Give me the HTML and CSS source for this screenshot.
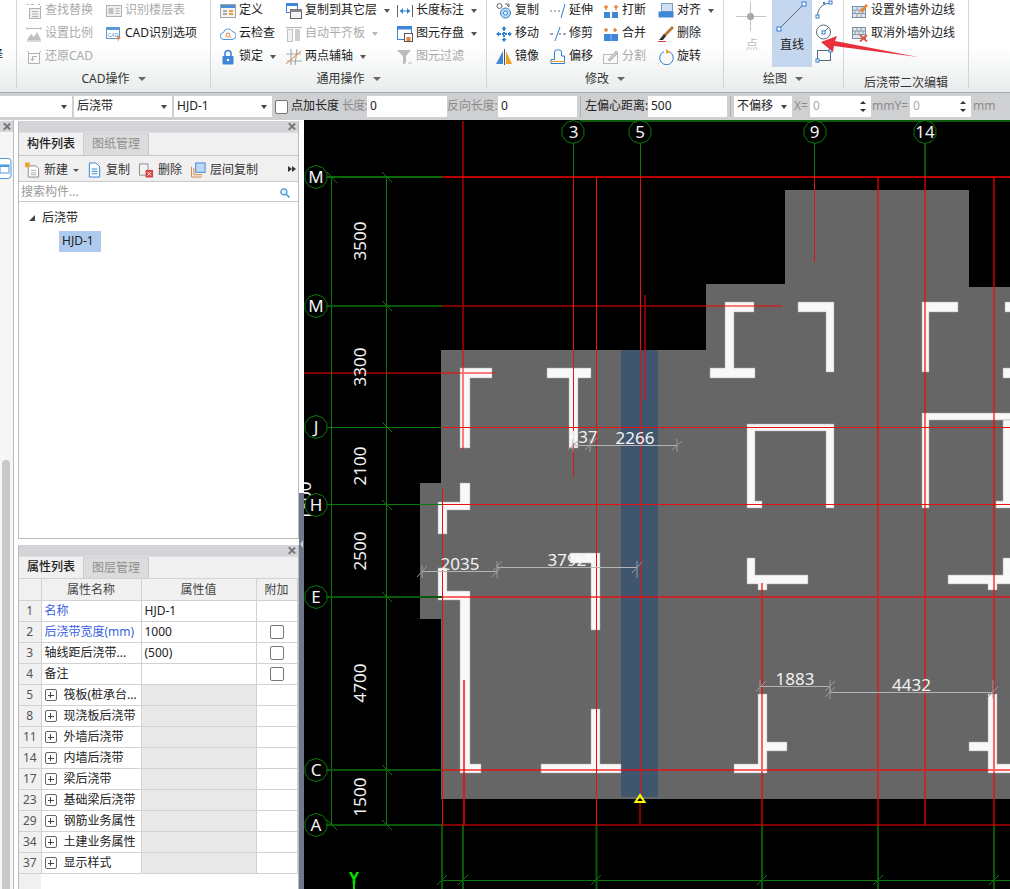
FILE: index.html
```html
<!DOCTYPE html>
<html lang="zh-CN">
<head>
<meta charset="utf-8">
<title>后浇带</title>
<link rel="stylesheet" href="styles.css">
</head>
<body>
<svg class="sprite" width="0" height="0" aria-hidden="true">
  <symbol id="i-find" viewBox="0 0 16 16"><path d="M1 1.500h2M5 1.500h3M12 1.500h2" stroke="#aaa" fill="none"/><path d="M14.500 3v2" stroke="#aaa"/><rect x="3.500" y="5.500" width="11" height="10" fill="#eee" stroke="#aaa"/><path d="M6 8.500h6M6 11h6M6 13.500h6" stroke="#aaa"/></symbol>
  <symbol id="i-floor" viewBox="0 0 16 16"><rect x=".5" y="2.500" width="15" height="11" fill="#eee" stroke="#aaa"/><rect x="2.500" y="5" width="5" height="6" fill="#bbb"/><path d="M9.500 5.500h4M9.500 8h4M9.500 10.500h4" stroke="#aaa"/></symbol>
  <symbol id="i-scale" viewBox="0 0 16 16"><path d="M1 2.500h14M1 1v3M15 1v3" stroke="#b5b5b5" fill="none"/><path d="M1 14l4-6 3 3 3-5 4 8z" fill="#b9b9b9"/><path d="M1 15h14" stroke="#aaa"/></symbol>
  <symbol id="i-restore" viewBox="0 0 16 16"><path d="M2.500 4.500h11v10h-11z" fill="none" stroke="#aaa"/><path d="M1 2l3 3M15 2l-3 3" stroke="#aaa"/><path d="M11 7.500H6.500v4M6.500 11.500l-2-2M6.500 11.500l2-2" fill="none" stroke="#aaa"/></symbol>
  <symbol id="i-define" viewBox="0 0 16 16"><rect x=".5" y="1.500" width="15" height="13" fill="#f4f4f4" stroke="#9aa6b2"/><rect x="1" y="2" width="14" height="3" fill="#4a8fd8"/><path d="M3 8h4M3 11h4" stroke="#aaa" stroke-width="2"/><path d="M9 8h4M9 11h4" stroke="#f0a030" stroke-width="2"/></symbol>
  <symbol id="i-cloud" viewBox="0 0 16 16"><path d="M4 13.500a3.500 3.500 0 0 1-.5-7A4.500 4.500 0 0 1 12 5.500a4 4 0 0 1 0 8z" fill="#fff" stroke="#4a9ae0"/><circle cx="8" cy="9" r="2" fill="none" stroke="#e9823a"/><path d="M9.500 10.500l1.500 1.500" stroke="#e9823a"/></symbol>
  <symbol id="i-lock" viewBox="0 0 16 16"><path d="M5 7V4.500a3 3 0 0 1 6 0V7" fill="none" stroke="#3f85d8" stroke-width="1.600"/><rect x="2.500" y="7" width="11" height="8.500" rx="1" fill="#3f85d8"/><circle cx="8" cy="11" r="1.300" fill="#fff"/></symbol>
  <symbol id="i-copyfloor" viewBox="0 0 16 16"><rect x=".5" y=".5" width="11" height="9" fill="#fff" stroke="#3f85d8"/><rect x=".5" y=".5" width="11" height="2.500" fill="#3f85d8"/><rect x="4.500" y="6.500" width="11" height="9" fill="#f2f2f2" stroke="#666"/><rect x="4.500" y="6.500" width="11" height="2.500" fill="#888"/></symbol>
  <symbol id="i-autoalign" viewBox="0 0 16 16"><path d="M0 1.500h16" stroke="#aaa"/><rect x="1.500" y="3.500" width="5" height="12" fill="#f2f2f2" stroke="#bbb"/><rect x="9" y="3" width="5" height="12" fill="#c9c9c9"/></symbol>
  <symbol id="i-axis" viewBox="0 0 16 16"><path d="M5 0v16M11 0l-2 16" stroke="#999" fill="none"/><path d="M0 5h15M1 12h15" stroke="#aaa"/><path d="M0 15L15 2" stroke="#e9823a"/></symbol>
  <symbol id="i-dim" viewBox="0 0 16 16"><path d="M.5 2v12M15.500 2v12" stroke="#666"/><path d="M3 8h10" stroke="#2f7fd0"/><path d="M3 8l3-3v6zM13 8l-3-3v6z" fill="#2f7fd0"/></symbol>
  <symbol id="i-save" viewBox="0 0 16 16"><rect x=".5" y=".5" width="14" height="13" fill="#fff" stroke="#3f85d8"/><rect x=".5" y=".5" width="14" height="3" fill="#3f85d8"/><rect x="7.500" y="7.500" width="8" height="8" fill="#fff" stroke="#555"/><rect x="9.500" y="11" width="4" height="4" fill="#e9823a"/></symbol>
  <symbol id="i-filter" viewBox="0 0 16 16"><path d="M0 1h14L9 7v7l-3 1.500V7z" fill="#b5b5b5"/><path d="M11 14h4" stroke="#bbb"/></symbol>
  <symbol id="i-copy" viewBox="0 0 16 16"><circle cx="3.500" cy="3" r="2.500" fill="none" stroke="#666"/><circle cx="9.500" cy="10" r="5" fill="#bcdcf5" stroke="#2f7fd0"/><circle cx="9.500" cy="10" r="2" fill="#fff" stroke="#2f7fd0"/><path d="M9 1h4v3M13 4l-2-2" fill="none" stroke="#666"/></symbol>
  <symbol id="i-extend" viewBox="0 0 16 16"><path d="M0 8h2M4 8h2M8 8h2" stroke="#777"/><path d="M11 15l4-14" stroke="#2f7fd0"/></symbol>
  <symbol id="i-break" viewBox="0 0 16 16"><path d="M1 9h6v6H1zM9 9h6v6H9z" fill="#3f85d8"/><path d="M3 2v5M13 2v5" stroke="#e9823a" stroke-width="1.500"/><path d="M1 4h4M11 4h4" stroke="#e9823a" stroke-width="1.500"/></symbol>
  <symbol id="i-align" viewBox="0 0 16 16"><rect x="3.500" y=".5" width="11" height="8" fill="#cfe0f3" stroke="#7a9cc0"/><rect x=".5" y="8.500" width="15" height="6" fill="#3f85d8"/></symbol>
  <symbol id="i-move" viewBox="0 0 16 16"><path d="M8 0l2.500 3h-5zM8 16l2.500-3h-5zM0 8l3-2.500v5zM16 8l-3-2.500v5z" fill="#2f7fd0"/><path d="M3 8h10M8 3v10" stroke="#2f7fd0" stroke-width="2" stroke-dasharray="2 1"/></symbol>
  <symbol id="i-trim" viewBox="0 0 16 16"><path d="M0 8h3M9 8h2M13 8h3" stroke="#555"/><path d="M5 15L10 1" stroke="#2f7fd0"/></symbol>
  <symbol id="i-merge" viewBox="0 0 16 16"><rect x="1" y="8" width="14" height="7" fill="#3f85d8"/><path d="M8 8v7" stroke="#8ab8ea"/><path d="M3 2v4M1 4h4M12 2v4M10 4h4" stroke="#e9823a" stroke-width="1.500"/></symbol>
  <symbol id="i-delete" viewBox="0 0 16 16"><path d="M15 1L6 10" stroke="#b5793a" stroke-width="3"/><path d="M6 8l2 2-3 4H1z" fill="#333"/><path d="M0 15.500h8" stroke="#e03030"/></symbol>
  <symbol id="i-mirror" viewBox="0 0 16 16"><path d="M7 2v13H0z" fill="#3f85d8"/><path d="M8.500 0v16" stroke="#555"/><path d="M10 2v13h6z" fill="#f0a020"/></symbol>
  <symbol id="i-offset" viewBox="0 0 16 16"><path d="M1 14.500v-4h3.500V3a2 2 0 0 1 2-2h3a2 2 0 0 1 2 2v4h3v7.500z" fill="#fff" stroke="#2f7fd0"/><path d="M1 12.500h14" stroke="#f0a020"/></symbol>
  <symbol id="i-split" viewBox="0 0 16 16"><rect x=".5" y="5.500" width="14" height="9" fill="none" stroke="#b5b5b5"/><path d="M5 11L13 2l2 2-8 8z" fill="#ccc" stroke="#aaa"/></symbol>
  <symbol id="i-rotate" viewBox="0 0 16 16"><path d="M6 2.600A6.800 6.800 0 1 0 11 2.600" fill="none" stroke="#2f7fd0"/><path d="M8 0l4 3-4 2z" fill="#f0a020"/></symbol>
  <symbol id="i-wallset" viewBox="0 0 16 16"><rect x=".5" y="3.500" width="13" height="11" fill="#e4e8ec" stroke="#7890a8"/><path d="M1 7h12M1 10.500h12M5 3.500V7M9 3.500V7M3 7v3.500M7 7v3.500M11 7v3.500M5 10.500v4M9 10.500v4" stroke="#8a9aaa"/><path d="M8 8L14 1l2 1.500-6 7z" fill="#f08020"/></symbol>
  <symbol id="i-wallno" viewBox="0 0 16 16"><rect x=".5" y="1.500" width="13" height="11" fill="#e4e8ec" stroke="#7890a8"/><path d="M1 5h12M1 8.500h12M5 1.500V5M9 1.500V5M3 5v3.500M7 5v3.500M11 5v3.500" stroke="#8a9aaa"/><path d="M8 9l7 6.500M15 9l-7 6.500" stroke="#e0503a" stroke-width="1.800"/></symbol>
  <symbol id="i-new" viewBox="0 0 16 16"><path d="M3.500 3.500h8l3 3v9h-11z" fill="#fff" stroke="#888"/><path d="M6 8.500h6M6 11h6M6 13h6" stroke="#aaa"/><rect x="0" y="0" width="5" height="5" fill="#f0a030"/></symbol>
  <symbol id="i-pcopy" viewBox="0 0 16 16"><path d="M2.500 .5h7l4 4v11h-11z" fill="#fff" stroke="#2f7fd0"/><path d="M5 7h6M5 9.500h6M5 12h6" stroke="#2f7fd0"/></symbol>
  <symbol id="i-pdel" viewBox="0 0 16 16"><path d="M.5 1.500h9v12h-9z" fill="#f2f2f2" stroke="#888"/><rect x="7" y="8" width="8" height="8" fill="#d84040"/><path d="M9 10l4 4M13 10l-4 4" stroke="#fff"/></symbol>
  <symbol id="i-layer" viewBox="0 0 16 16"><path d="M.5 15.500v-11M.5 15.500h11M3 13V6M3 13h9" fill="none" stroke="#e0803a"/><rect x="5" y=".5" width="10" height="10" fill="#bcd8f4" stroke="#3f85d8"/></symbol>
  <symbol id="i-mag" viewBox="0 0 16 16"><circle cx="6.500" cy="6.500" r="4" fill="#e8f3fb" stroke="#3f95d0" stroke-width="1.600"/><path d="M10 10l4 4" stroke="#3f95d0" stroke-width="2"/></symbol>
  <symbol id="i-panel" viewBox="0 0 12 21"><rect x="-3" y=".5" width="14" height="20" rx="3" fill="#fff" stroke="#4a9ae0"/><rect x="0" y="7" width="9" height="8" fill="#fff" stroke="#4a9ae0"/><rect x="0" y="7" width="9" height="2" fill="#4a9ae0"/></symbol>
</svg>

<div class="app">
  <header class="ribbon">
    <section class="grp g0"><div class="gbody clip">择</div></section>

    <section class="grp g1">
      <div class="gbody">
        <div class="col c80">
          <div class="it off"><svg class="ic"><use href="#i-find"/></svg><span>查找替换</span></div>
          <div class="it off"><svg class="ic"><use href="#i-scale"/></svg><span>设置比例</span></div>
          <div class="it off"><svg class="ic"><use href="#i-restore"/></svg><span>还原CAD</span></div>
        </div>
        <div class="col">
          <div class="it off"><svg class="ic"><use href="#i-floor"/></svg><span>识别楼层表</span></div>
          <div class="it"><svg class="ic" viewBox="0 0 16 16"><rect x=".5" y="1.500" width="13" height="11" fill="#fff" stroke="#5b9bd5"/><rect x=".5" y="1.500" width="13" height="2.500" fill="#5b9bd5"/><text x="7" y="10.500" class="tiny">CAD</text><path d="M11 9l4 3-2 1-1 3z" fill="#e9823a"/></svg><span>CAD识别选项</span></div>
        </div>
      </div>
      <div class="glabel">CAD操作<i class="car"></i></div>
    </section>

    <section class="grp g2">
      <div class="gbody">
        <div class="col c66">
          <div class="it"><svg class="ic"><use href="#i-define"/></svg><span>定义</span></div>
          <div class="it"><svg class="ic"><use href="#i-cloud"/></svg><span>云检查</span></div>
          <div class="it"><svg class="ic"><use href="#i-lock"/></svg><span>锁定</span><i class="car"></i></div>
        </div>
        <div class="col c111">
          <div class="it"><svg class="ic"><use href="#i-copyfloor"/></svg><span>复制到其它层</span><i class="car"></i></div>
          <div class="it off"><svg class="ic"><use href="#i-autoalign"/></svg><span>自动平齐板</span><i class="car"></i></div>
          <div class="it"><svg class="ic"><use href="#i-axis"/></svg><span>两点辅轴</span><i class="car"></i></div>
        </div>
        <div class="col">
          <div class="it"><svg class="ic"><use href="#i-dim"/></svg><span>长度标注</span><i class="car"></i></div>
          <div class="it"><svg class="ic"><use href="#i-save"/></svg><span>图元存盘</span><i class="car"></i></div>
          <div class="it off"><svg class="ic"><use href="#i-filter"/></svg><span>图元过滤</span></div>
        </div>
      </div>
      <div class="glabel">通用操作<i class="car"></i></div>
    </section>

    <section class="grp g3">
      <div class="gbody">
        <div class="col c54">
          <div class="it"><svg class="ic"><use href="#i-copy"/></svg><span>复制</span></div>
          <div class="it"><svg class="ic"><use href="#i-move"/></svg><span>移动</span></div>
          <div class="it"><svg class="ic"><use href="#i-mirror"/></svg><span>镜像</span></div>
        </div>
        <div class="col c53">
          <div class="it"><svg class="ic"><use href="#i-extend"/></svg><span>延伸</span></div>
          <div class="it"><svg class="ic"><use href="#i-trim"/></svg><span>修剪</span></div>
          <div class="it"><svg class="ic"><use href="#i-offset"/></svg><span>偏移</span></div>
        </div>
        <div class="col c55">
          <div class="it"><svg class="ic"><use href="#i-break"/></svg><span>打断</span></div>
          <div class="it"><svg class="ic"><use href="#i-merge"/></svg><span>合并</span></div>
          <div class="it off"><svg class="ic"><use href="#i-split"/></svg><span>分割</span></div>
        </div>
        <div class="col">
          <div class="it"><svg class="ic"><use href="#i-align"/></svg><span>对齐</span><i class="car"></i></div>
          <div class="it"><svg class="ic"><use href="#i-delete"/></svg><span>删除</span></div>
          <div class="it"><svg class="ic"><use href="#i-rotate"/></svg><span>旋转</span></div>
        </div>
      </div>
      <div class="glabel">修改<i class="car"></i></div>
    </section>

    <section class="grp g4">
      <div class="gbody">
        <div class="big off">
          <svg class="bigic" viewBox="0 0 40 32"><path d="M4 15.500h30M18.500 1v29" stroke="#c4c4c4"/><circle cx="18.500" cy="15.500" r="3.500" fill="#a8a8a8"/></svg>
          <span>点</span>
        </div>
        <div class="big on">
          <svg class="bigic" viewBox="0 0 40 32"><path d="M7 28L32 3" stroke="#5a6a7a"/><rect x="5" y="26" width="4" height="4" fill="#fff" stroke="#2f7fd0"/><rect x="30" y="1" width="4" height="4" fill="#fff" stroke="#2f7fd0"/></svg>
          <span>直线</span>
        </div>
        <div class="minis">
          <svg class="mini" viewBox="0 0 20 23"><path d="M3.500 17C4 9 8 5 16 4" fill="none" stroke="#5a6a7a"/><rect x="2" y="16" width="3" height="3" fill="#fff" stroke="#2f7fd0"/><rect x="15" y="2" width="3" height="3" fill="#fff" stroke="#2f7fd0"/><rect x="9" y="3" width="2" height="2" fill="#2f7fd0"/></svg>
          <svg class="mini" viewBox="0 0 20 23"><circle cx="9.500" cy="10" r="7" fill="none" stroke="#5a6a7a"/><rect x="8" y="9" width="3" height="3" fill="#fff" stroke="#2f7fd0"/><path d="M11 9l3-3" stroke="#5a6a7a"/></svg>
          <svg class="mini" viewBox="0 0 20 23"><rect x="3.500" y="5.500" width="13" height="10" fill="none" stroke="#5a6a7a"/><rect x="2" y="14" width="3" height="3" fill="#fff" stroke="#2f7fd0"/><rect x="15" y="4" width="3" height="3" fill="#fff" stroke="#2f7fd0"/></svg>
        </div>
      </div>
      <div class="glabel">绘图<i class="car"></i></div>
    </section>

    <section class="grp g5">
      <div class="gbody">
        <div class="col">
          <div class="it"><svg class="ic"><use href="#i-wallset"/></svg><span>设置外墙外边线</span></div>
          <div class="it"><svg class="ic"><use href="#i-wallno"/></svg><span>取消外墙外边线</span></div>
        </div>
      </div>
      <div class="glabel low">后浇带二次编辑</div>
    </section>
    <section class="grp g6"></section>
  </header>

  <div class="optbar">
    <div class="combo w72"><i class="car"></i></div>
    <div class="combo w98 m2"><span>后浇带</span><i class="car"></i></div>
    <div class="combo w98 m2"><span>HJD-1</span><i class="car"></i></div>
    <span class="cb m3"></span>
    <span class="lb w48 m3">点加长度</span>
    <span class="lb dim w25 m3">长度:</span>
    <div class="inp w80">0</div>
    <span class="lb dim w51">反向长度:</span>
    <div class="inp w79">0</div>
    <i class="sep"></i>
    <span class="lb w64">左偏心距离:</span>
    <div class="inp w79">500</div>
    <i class="sep"></i>
    <div class="combo w58"><span>不偏移</span><i class="car"></i></div>
    <span class="lb dim w18">X=</span>
    <div class="inp w61 spin dimv">0<b class="spn"><i class="up"></i><i class="dn"></i></b></div>
    <span class="lb dim w39">mmY=</span>
    <div class="inp w61 spin dimv">0<b class="spn"><i class="up"></i><i class="dn"></i></b></div>
    <span class="lb dim m2">mm</span>
  </div>

  <main class="work">
    <aside class="strip">
      <div class="phead"><i class="x"></i></div>
      <svg class="stripic" viewBox="0 0 12 21"><use href="#i-panel"/></svg>
      <div class="grow"></div>
      <div class="sbar"></div>
    </aside>

    <aside class="side">
      <section class="panel p1">
        <div class="phead"><i class="x"></i></div>
        <div class="tabs"><span class="tab act">构件列表</span><span class="tab">图纸管理</span></div>
        <div class="ptools">
          <span class="pt n1"><svg class="ic"><use href="#i-new"/></svg>新建<i class="car"></i></span>
          <span class="pt n2"><svg class="ic"><use href="#i-pcopy"/></svg>复制</span>
          <span class="pt n3"><svg class="ic"><use href="#i-pdel"/></svg>删除</span>
          <span class="pt n4"><svg class="ic"><use href="#i-layer"/></svg>层间复制</span>
          <span class="more"></span>
        </div>
        <div class="search"><span>搜索构件...</span><svg class="mag"><use href="#i-mag"/></svg></div>
        <div class="tree">
          <div class="node"><i class="tri"></i>后浇带</div>
          <div class="leaf"><span>HJD-1</span></div>
        </div>
      </section>

      <section class="panel p2">
        <div class="phead"><i class="x"></i></div>
        <div class="tabs t2"><span class="tab act">属性列表</span><span class="tab">图层管理</span></div>
        <table class="props">
          <colgroup><col class="cn"><col class="cname"><col class="cval"><col class="cadd"></colgroup>
          <thead><tr><th></th><th>属性名称</th><th>属性值</th><th>附加</th></tr></thead>
          <tbody>
            <tr><td class="no">1</td><td class="blue">名称</td><td>HJD-1</td><td></td></tr>
            <tr><td class="no">2</td><td class="blue">后浇带宽度(mm)</td><td>1000</td><td class="chk"><span class="cb"></span></td></tr>
            <tr><td class="no">3</td><td>轴线距后浇带...</td><td>(500)</td><td class="chk"><span class="cb"></span></td></tr>
            <tr><td class="no">4</td><td>备注</td><td></td><td class="chk"><span class="cb"></span></td></tr>
            <tr><td class="no">5</td><td><i class="plus"></i>筏板(桩承台...</td><td class="gr"></td><td></td></tr>
            <tr><td class="no">8</td><td><i class="plus"></i>现浇板后浇带</td><td class="gr"></td><td></td></tr>
            <tr><td class="no">11</td><td><i class="plus"></i>外墙后浇带</td><td class="gr"></td><td></td></tr>
            <tr><td class="no">14</td><td><i class="plus"></i>内墙后浇带</td><td class="gr"></td><td></td></tr>
            <tr><td class="no">17</td><td><i class="plus"></i>梁后浇带</td><td class="gr"></td><td></td></tr>
            <tr><td class="no">23</td><td><i class="plus"></i>基础梁后浇带</td><td class="gr"></td><td></td></tr>
            <tr><td class="no">29</td><td><i class="plus"></i>钢筋业务属性</td><td class="gr"></td><td></td></tr>
            <tr><td class="no">34</td><td><i class="plus"></i>土建业务属性</td><td class="gr"></td><td></td></tr>
            <tr><td class="no">37</td><td><i class="plus"></i>显示样式</td><td class="gr"></td><td></td></tr>
          </tbody>
        </table>
        <div class="pfill"></div>
      </section>
    </aside>

    <div class="splitter"><div class="sp-top"></div><div class="sp-bot"><i class="sp-arrow"></i></div></div>

    <svg class="cad" viewBox="304 120 706 769">
      <defs>
        <polygon id="bb" points="0,-11.500 6.800,-9.300 10.900,-3.600 10.900,3.600 6.800,9.300 0,11.500 -6.800,9.300 -10.900,3.600 -10.900,-3.600 -6.800,-9.300"/>
      </defs>
      <polygon class="slab" points="441,350 706,350 706,284 785,284 785,190 969,190 969,287 1010,287 1010,799 441,799 441,619 420,619 420,483 441,483"/>
      <rect class="band" x="621" y="350" width="37" height="447"/>
      <g class="walls">
        <polygon points="460,368 492,368 492,378 470,378 470,448 460,448"/>
        <polygon points="547,368 591,368 591,378 578,378 578,448 569,448 569,378 547,378"/>
        <polygon points="460,483 470,483 470,510 447,510 447,534 438,534 438,502 460,502"/>
        <polygon points="438,568 447,568 447,591 470,591 470,764 481,764 481,773 460,773 460,600 438,600"/>
        <polygon points="541,764 591,764 591,709 600,709 600,764 621,764 621,773 541,773"/>
        <polygon points="570,553 600,553 600,630 591,630 591,563 570,563"/>
        <polygon points="725,302 754,302 754,312 734,312 734,368 755,368 755,378 710,378 710,368 725,368"/>
        <polygon points="798,302 834,302 834,372 826,372 826,312 798,312"/>
        <polygon points="922,302 958,302 958,312 929,312 929,372 922,372"/>
        <polygon points="1005,302 1011,302 1011,312 1005,312"/>
        <polygon points="1003,368 1011,368 1011,378 1003,378"/>
        <polygon points="747,424 834,424 834,508 826,508 826,431 755,431 755,501 762,501 762,508 747,508"/>
        <polygon points="922,413 1011,413 1011,420 929,420 929,508 922,508"/>
        <polygon points="1003,420 1011,420 1011,508 996,508 996,501 1003,501"/>
        <polygon points="747,558 755,558 755,575 808,575 808,584 767,584 767,590 758,590 758,584 747,584"/>
        <polygon points="948,575 1003,575 1003,558 1011,558 1011,584 997,584 997,590 988,590 988,584 948,584"/>
        <polygon points="758,694 767,694 767,742 787,742 787,751 767,751 767,773 734,773 734,764 758,764"/>
        <polygon points="988,694 997,694 997,764 1011,764 1011,773 988,773 988,751 969,751 969,742 988,742"/>
      </g>

      <path class="gn" d="M331.500 177V825M386.500 177V825M316 427.500H442M316 504.500H442M573.500 143V177M640.500 143V177M814.500 143V177M442 880.500H1010"/>
      <path class="gn mid" d="M316 177H442"/>
      <path class="gn dk" d="M580 121H1010M316 306H442M316 597H442M316 770H442M316 825H442M925 143V177M442 825V889M463 825V889M596.500 825V889M762 825V889M878 825V889M994 825V889"/>
      <path class="gn" d="M327 172L337 183M382 172L392 182M382 301L392 311M382 422L392 432M382 500L392 510M382 592L392 602M382 765L392 775M382 820L392 830M327 820L337 830M437 885L447 875M458 885L468 875M591 885L601 875M757 885L767 875M873 885L883 875M989 885L999 875"/>

      <path class="rb" d="M442 427.500H1010M442 504.500H1010M573.500 177V477M596.500 177V825M640.500 177V795M814.500 177V262M442.500 489V825"/>
      <path class="rt" d="M442 177H1010M464 680V825"/>
      <path class="rm" d="M442 597H1010M442 770H1010M762 583V825M878 177V825M925 177V825M994 177V825"/>
      <path class="rd" d="M442 306H782M304 373H494M442 825H1010M463 121V449M645 295V400M640 803V825"/>

      <path class="dl" d="M573 445.500H593M593 445.500H677M422 571.500H497M497 567.500H637M760 686.500H830M830 692.500H993"/>
      <path class="dt" d="M573 439V452M568 450L578 441M590 439V452M585 450L597 438M677 439V452M672 450L682 441M422 565V578M417 577L427 566M497 565V578M492 577L502 566M497 561V574M492 572L502 561M637 561V578M632 573L642 562M760 680V693M756 691L766 681M830 680V693M825 691L835 681M830 686V699M825 697L835 687M993 680V699M988 697L998 687"/>

      <g class="lbl">
        <text x="583" y="443" text-anchor="middle">137</text>
        <text x="635" y="444" text-anchor="middle">2266</text>
        <text x="460" y="570" text-anchor="middle">2035</text>
        <text x="567" y="566" text-anchor="middle">3792</text>
        <text x="795" y="685" text-anchor="middle">1883</text>
        <text x="911.500" y="691" text-anchor="middle">4432</text>
        <text class="v3500" text-anchor="middle">3500</text>
        <text class="v3300" text-anchor="middle">3300</text>
        <text class="v2100" text-anchor="middle">2100</text>
        <text class="v2500" text-anchor="middle">2500</text>
        <text class="v4700" text-anchor="middle">4700</text>
        <text class="v1500" text-anchor="middle">1500</text>
        <text class="v1800" text-anchor="middle">1800</text>
      </g>

      <g class="bub">
        <use href="#bb" x="573" y="132"/><use href="#bb" x="640" y="132"/><use href="#bb" x="815" y="132"/><use href="#bb" x="925" y="132"/>
        <use href="#bb" x="316" y="177"/><use href="#bb" x="316" y="306"/><use href="#bb" x="316" y="427"/><use href="#bb" x="316" y="505"/><use href="#bb" x="316" y="597"/><use href="#bb" x="316" y="770"/><use href="#bb" x="316" y="825"/>
      </g>
      <g class="lbl" text-anchor="middle">
        <text x="573.500" y="138">3</text><text x="640" y="138">5</text><text x="814.500" y="138">9</text><text x="925" y="138">14</text>
        <text x="316" y="183">M</text><text x="316" y="312">M</text><text x="316" y="433">J</text><text x="316" y="511">H</text><text x="316" y="603">E</text><text x="316" y="776">C</text><text x="316" y="831">A</text>
      </g>

      <polygon class="tri-y" points="640,795 644.500,802 635.500,802"/>
      <text class="axis-y" x="354" y="884" text-anchor="middle">Y</text>
      <path class="axis-l" d="M354 882V889"/>
    </svg>
  </main>

  <svg class="arrow" viewBox="0 0 100 24"><polygon points="0,8 16,2 14,7 97,23 13,12 12,18"/></svg>
</div>
</body>
</html>
```

FILE: styles.css
```css
* { box-sizing: border-box; }
html, body { margin: 0; padding: 0; }
body {
  width: 1010px; height: 889px; overflow: hidden; background: #fff;
  font: 12px/1.2 "Noto Sans", "Noto Sans CJK SC", sans-serif; color: #222;
}
.sprite { position: absolute; }
.tiny { font: 5px "Liberation Sans", sans-serif; fill: #5b9bd5; text-anchor: middle; }
.app { width: 1010px; height: 889px; display: flex; flex-direction: column; position: relative; overflow: hidden; }

/* ribbon */
.ribbon { height: 93px; flex: none; display: flex; overflow: hidden; border-bottom: 1px solid #a4a6a8; background: linear-gradient(#fff 0, #fff 50%, #e9ecec 100%); }
.grp { flex: none; height: 88px; display: flex; flex-direction: column; border-right: 1px solid #d2d4d6; }
.g0 { width: 17px; }
.g1 { width: 194px; padding-left: 9px; }
.g2 { width: 276px; padding-left: 9px; }
.g3 { width: 237px; padding-left: 9px; }
.g4 { width: 120px; padding-left: 8px; }
.g5 { width: 125px; padding-left: 8px; }
.g6 { flex: 1; border-right: 0; }
.gbody { height: 69px; margin-top: -1px; display: flex; flex: none; }
.clip { font-size: 12px; padding-top: 49px; margin-left: -9px; }
.col { display: flex; flex-direction: column; }
.c80 { width: 80px; } .c66 { width: 66px; } .c111 { width: 111px; }
.c54 { width: 54px; } .c53 { width: 53px; } .c55 { width: 55px; }
.it { height: 23px; display: flex; align-items: center; gap: 3px; white-space: nowrap; color: #1c1c1c; }
.ic { width: 16px; height: 16px; flex: none; }
.off { color: #aaa; }
.off .ic { opacity: .9; }
.car { display: inline-block; width: 0; height: 0; margin-left: 4px; border: 3.500px solid transparent; border-top: 4px solid #555; border-bottom: 0; flex: none; vertical-align: middle; }
.off .car { border-top-color: #bbb; }
.glabel { height: 22px; display: flex; align-items: center; justify-content: center; margin-left: -9px; padding-top: 2px; color: #333; }
.glabel .car { border-top-color: #666; margin-left: 8px; border-left-width: 4px; border-right-width: 4px; }
.low { padding-top: 8px; margin-left: -8px; }
.big { width: 40px; height: 68px; display: flex; flex-direction: column; align-items: center; }
.big span { margin-top: 5px; }
.big.on { background: #c5d7ee; color: #1c1c1c; }
.big.off { color: #c0c0c0; }
.bigic { width: 40px; height: 32px; margin-top: 2px; flex: none; }
.minis { display: flex; flex-direction: column; margin-left: 2px; }
.mini { width: 20px; height: 23px; flex: none; }

/* option bar */
.optbar { height: 27px; flex: none; display: flex; align-items: center; background: #cfd0d2; white-space: nowrap; }
.combo, .inp { height: 21px; background: #fff; display: flex; align-items: center; padding: 0 3px; flex: none; color: #222; }
.combo { justify-content: space-between; padding-right: 5px; }
.combo .car { margin: 0 0 0 auto; border-top-color: #444; }
.w72 { width: 72px; } .w98 { width: 98px; } .w80 { width: 80px; } .w79 { width: 79px; } .w58 { width: 58px; } .w61 { width: 61px; }
.m2 { margin-left: 2px; } .m3 { margin-left: 3px; }
.lb { flex: none; color: #222; }
.dim { color: #8c8c8c; }
.dimv { color: #aaa; }
.w48 { width: 48px; }
.w25 { width: 25px; letter-spacing: -.8px; }
.w51 { width: 51px; letter-spacing: -.1px; }
.w64 { width: 64px; padding-left: 1px; }
.w18 { width: 18px; padding-left: 2px; }
.w39 { width: 39px; padding-left: 1px; }
.sep { width: 1px; height: 21px; background: #b0b0b0; margin: 0 3px; flex: none; }
.cb { display: inline-block; width: 13px; height: 14px; background: #fff; border: 1px solid #777; border-radius: 2px; flex: none; }
.spin { justify-content: space-between; }
.spn { display: flex; flex-direction: column; gap: 5px; margin-right: 2px; }
.spn i { display: block; width: 0; height: 0; border: 3px solid transparent; }
.spn .up { border-bottom: 3px solid #333; border-top: 0; }
.spn .dn { border-top: 3px solid #333; border-bottom: 0; }

/* work area */
.work { flex: 1; display: flex; min-height: 0; background: #fff; }
.strip { width: 14px; flex: none; background: #f6f6f6; border-right: 1px solid #b8babc; display: flex; flex-direction: column; margin-right: 4px; padding-top: 1px; }
.stripic { width: 12px; height: 21px; margin-top: 26px; flex: none; }
.grow { flex: 1; }
.sbar { width: 8px; height: 429px; margin-left: 2px; background: #c8c8c8; border-radius: 4px 4px 0 0; flex: none; }
.phead { height: 11px; flex: none; background: #d3d5d9; display: flex; justify-content: flex-end; align-items: center; padding-right: 3px; }
.x { position: relative; width: 7px; height: 7px; display: block; }
.x::before, .x::after { content: ""; position: absolute; left: 3px; top: -1px; width: 1.500px; height: 9px; background: #777; }
.x::before { transform: rotate(45deg); }
.x::after { transform: rotate(-45deg); }
.side { width: 281px; flex: none; display: flex; flex-direction: column; padding-top: 1px; }
.panel { border: 1px solid #b8babc; border-top: 0; display: flex; flex-direction: column; background: #fff; }
.p1 { height: 418px; flex: none; margin-bottom: 6px; }
.p2 { flex: 1; min-height: 0; border-bottom: 0; }
.tabs { height: 23px; flex: none; display: flex; background: #f0f0f0; border-top: 1px solid #e0e0e0; }
.t2 { height: 22px; }
.tab { width: 65px; display: flex; align-items: center; justify-content: center; color: #909090; background: #dcdcdc; border-right: 1px solid #c8c8c8; border-top: 1px solid #d4d4d4; }
.tab.act { background: #f0f0f0; color: #222; font-weight: 500; border-right: 1px solid #d0d0d0; border-top: 0; }
.ptools { height: 27px; flex: none; display: flex; align-items: center; padding-top: 3px; background: #f0f0f0; border-top: 1px solid #c6c8ca; border-bottom: 1px solid #c6c8ca; color: #333; position: relative; }
.pt { display: flex; align-items: center; flex: none; gap: 4px; white-space: nowrap; }
.pt .ic { width: 15px; height: 16px; }
.pt .car { margin-left: 1px; border-width: 3px; border-top-width: 3.500px; border-bottom: 0; }
.n1 { margin-left: 6px; }
.n2 { margin-left: 8px; }
.n3 { margin-left: 9px; }
.n4 { margin-left: 9px; }
.more { margin-left: auto; margin-right: 1px; width: 9px; height: 8px; position: relative; }
.more::before, .more::after { content: ""; position: absolute; top: 0; width: 0; height: 0; border: 3.500px solid transparent; border-left: 4px solid #333; border-right: 0; }
.more::before { left: 0; }
.more::after { left: 4px; }
.search { height: 20px; flex: none; display: flex; align-items: center; justify-content: space-between; padding: 2px 7px 0 2px; color: #999; border-bottom: 1px solid #c6c8ca; background: #fff; }
.mag { width: 12px; height: 12px; }
.tree { flex: 1; padding-top: 6px; }
.node { height: 20px; display: flex; align-items: center; padding-left: 10px; color: #222; }
.tri { width: 0; height: 0; border-bottom: 6px solid #444; border-left: 6px solid transparent; margin-right: 7px; }
.leaf { margin: 3px 0 0 40px; }
.leaf span { display: inline-flex; align-items: center; width: 42px; height: 21px; padding-left: 3px; background: #aecbee; color: #222; }

.props { width: 278px; border-collapse: collapse; table-layout: fixed; flex: none; }
.cn { width: 22px; } .cname { width: 100px; } .cval { width: 115px; } .cadd { width: 41px; }
.props th, .props td { height: 21px; padding: 0 0 0 3px; border: 1px solid #d2d2d2; font-weight: 400; white-space: nowrap; overflow: hidden; color: #222; line-height: 1; }
.props tr > :first-child { border-left: 0; }
.props th { background: #f0f0f0; text-align: center; padding: 0; color: #444; height: 22px; }
.props td.no { background: #f0f0f0; color: #555; text-align: center; padding: 0; }
.props td.blue { color: #3a62e0; }
.props td.gr { background: #e9e9e9; }
.props td.chk { text-align: center; padding: 0; }
.props .cb { width: 14px; vertical-align: middle; }
.plus { display: inline-block; width: 12px; height: 12px; border: 1px solid #666; border-radius: 2px; margin: 0 7px 0 0; vertical-align: -2px; background: linear-gradient(#444, #444) center / 6px 1px no-repeat, linear-gradient(#444, #444) center / 1px 6px no-repeat, #fff; }
.pfill { flex: 1; border-left: 22px solid #f0f0f0; }

.splitter { width: 5px; flex: none; display: flex; flex-direction: column; }
.sp-top { height: 373px; flex: none; background: #fff; }
.sp-bot { flex: 1; background: #6e7a8a; padding-top: 47px; padding-left: 1px; }
.sp-arrow { display: block; width: 0; height: 0; border: 4px solid transparent; border-right: 3px solid #c8ccd0; border-left: 0; }

/* CAD canvas */
.cad { width: 706px; height: 769px; flex: none; background: #000; display: block; }
.slab { fill: #666; }
.band { fill: #40566f; }
.walls polygon { fill: #f8f8f8; stroke: #aaa; stroke-width: .5; }
.gn { fill: none; stroke: #0b7a0b; stroke-width: 1; }
.gn.mid { stroke: #0a6a0a; stroke-width: 2; }
.gn.dk { stroke: #0a560a; stroke-width: 2; }
.rb { fill: none; stroke: #e81010; stroke-width: 1; }
.rt { fill: none; stroke: rgba(255, 0, 0, .72); stroke-width: 2; }
.rm { fill: none; stroke: rgba(255, 0, 0, .6); stroke-width: 2; }
.rd { fill: none; stroke: rgba(255, 0, 0, .5); stroke-width: 2; }
.dl { fill: none; stroke: #b4b4b4; stroke-width: 1; }
.dt { fill: none; stroke: #9a9a9a; stroke-width: 1; }
.lbl text { font: 17px "Noto Sans", sans-serif; fill: #f2f2f2; }
.v3500 { transform: translate(366px, 241px) rotate(-90deg); }
.v3300 { transform: translate(366px, 367px) rotate(-90deg); }
.v2100 { transform: translate(366px, 466px) rotate(-90deg); }
.v2500 { transform: translate(366px, 551px) rotate(-90deg); }
.v4700 { transform: translate(366px, 683px) rotate(-90deg); }
.v1500 { transform: translate(366px, 797px) rotate(-90deg); }
.v1800 { transform: translate(311px, 501px) rotate(-90deg); }
.bub use { fill: #000; stroke: #0b7a0b; stroke-width: 1; }
.tri-y { fill: none; stroke: #ffff00; stroke-width: 2; }
.axis-y { font: 700 16px "Noto Sans", sans-serif; fill: #00e000; }
.axis-l { stroke: #00e000; stroke-width: 2; fill: none; }

.arrow { position: absolute; left: 821px; top: 34px; width: 100px; height: 24px; }
.arrow polygon { fill: #e8303a; }
```
